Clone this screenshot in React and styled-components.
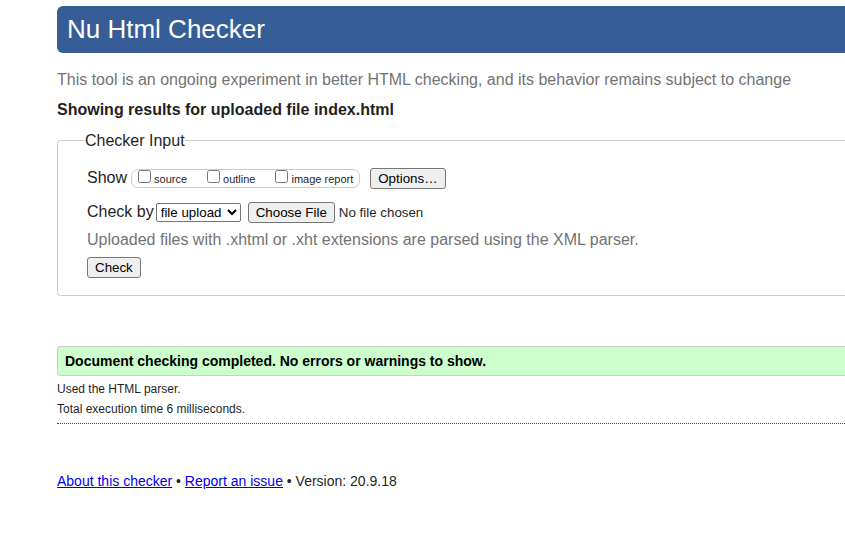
import React from "react";
import styled, { createGlobalStyle } from "styled-components";

const GlobalStyle = createGlobalStyle`
  body {
    margin: 0;
    background: #fff;
    color: #1f1f1f;
    font-family: Arial, "Liberation Sans", sans-serif;
    font-size: 16px;
    line-height: 20px;
  }
  button, input, select {
    font-family: Arial, "Liberation Sans", sans-serif;
  }
`;

const Page = styled.div`
  padding: 6px 0 50px 57px;
`;

const Banner = styled.header`
  padding: 7px 10px 8px;
  background: #365d95;
  border-radius: 6px 0 0 6px;
`;

const Title = styled.h1`
  margin: 0;
  color: #fff;
  font-size: 26px;
  font-weight: 400;
  line-height: 32px;
`;

const Tagline = styled.p`
  margin: 17px 0 10px;
  color: #737373;
`;

const ResultHeading = styled.h2`
  margin: 0 0 10px;
  font-size: 16px;
  line-height: 20px;
`;

const InputGroup = styled.fieldset`
  margin: 0;
  padding: 17px 29px;
  border: 1px solid #ccc;
  border-right: 0;
  border-radius: 4px 0 0 4px;
`;

const Legend = styled.legend`
  margin-left: -2px;
  padding: 2px 0 0;
  line-height: 18px;
`;

const Row = styled.div`
  display: flex;
  align-items: center;
  gap: ${(p) => p.$gap || 4}px;
  height: 22px;
  margin-bottom: ${(p) => p.$after || 0}px;
`;

const ShowOptions = styled.div`
  display: flex;
  align-items: center;
  gap: 20px;
  box-sizing: border-box;
  height: 19px;
  margin-right: 6px;
  padding: 0 6px;
  border: 1px solid #ccc;
  border-radius: 7px;
`;

const CheckLabel = styled.label`
  display: flex;
  align-items: center;
  gap: 3px;
  font-size: 11px;
  line-height: 17px;
  padding-top: 2px;
`;

const Checkbox = styled.input`
  width: 13px;
  height: 13px;
  margin: 0 0 6px;
`;

const Button = styled.button`
  height: 21px;
  padding: 1px 7px;
  border: 1px solid #767676;
  border-radius: 3px;
  background: #efefef;
  color: #000;
`;

const Select = styled.select`
  width: 85px;
  height: 19px;
  margin-right: 5px;
  border: 1px solid #767676;
  border-radius: 2px;
  background: #fff;
  color: #000;
`;

const FilePicker = styled.input`
  height: 21px;
  color: #1f1f1f;

  &::file-selector-button {
    height: 21px;
    margin-right: 4px;
    padding: 1px 7px;
    border: 1px solid #767676;
    border-radius: 3px;
    background: #efefef;
    color: #000;
  }
`;

const Hint = styled.p`
  margin: 0 0 7px;
  color: #737373;
`;

const Success = styled.p`
  margin: 50px 0 3px;
  padding: 4px 7px;
  border: 1px solid #ccc;
  border-right: 0;
  border-radius: 4px 0 0 4px;
  background: #cfc;
  color: #000;
  font-size: 14px;
  font-weight: 700;
`;

const Detail = styled.p`
  margin: 0;
  font-size: 12px;
`;

const Footer = styled.footer`
  margin-top: 4px;
  padding-top: 47px;
  border-top: 1px dotted #444;
  font-size: 14px;
`;

const Link = styled.a`
  color: #00e;
`;

const outputs = ["source", "outline", "image report"];

export default function App() {
  return (
    <Page>
      <GlobalStyle />
      <Banner>
        <Title>Nu Html Checker</Title>
      </Banner>
      <main>
        <Tagline>
          This tool is an ongoing experiment in better HTML checking, and its
          behavior remains subject to change
        </Tagline>
        <ResultHeading>Showing results for uploaded file index.html</ResultHeading>
        <form onSubmit={(e) => e.preventDefault()}>
          <InputGroup>
            <Legend>Checker Input</Legend>
            <Row $after={12}>
              <span>Show</span>
              <ShowOptions>
                {outputs.map((name) => (
                  <CheckLabel key={name}>
                    <Checkbox type="checkbox" name="show" value={name} />
                    {name}
                  </CheckLabel>
                ))}
              </ShowOptions>
              <Button type="button">Options…</Button>
            </Row>
            <Row $gap={2} $after={7}>
              <label htmlFor="method">Check by</label>
              <Select id="method" defaultValue="file upload">
                <option>address</option>
                <option>file upload</option>
                <option>text input</option>
              </Select>
              <FilePicker type="file" aria-label="File to check" />
            </Row>
            <Hint>
              Uploaded files with .xhtml or .xht extensions are parsed using the
              XML parser.
            </Hint>
            <Button type="submit">Check</Button>
          </InputGroup>
        </form>
        <Success>Document checking completed. No errors or warnings to show.</Success>
        <Detail>Used the HTML parser.</Detail>
        <Detail>Total execution time 6 milliseconds.</Detail>
      </main>
      <Footer>
        <Link href="#about">About this checker</Link> •{" "}
        <Link href="#issues">Report an issue</Link> • Version: 20.9.18
      </Footer>
    </Page>
  );
}
